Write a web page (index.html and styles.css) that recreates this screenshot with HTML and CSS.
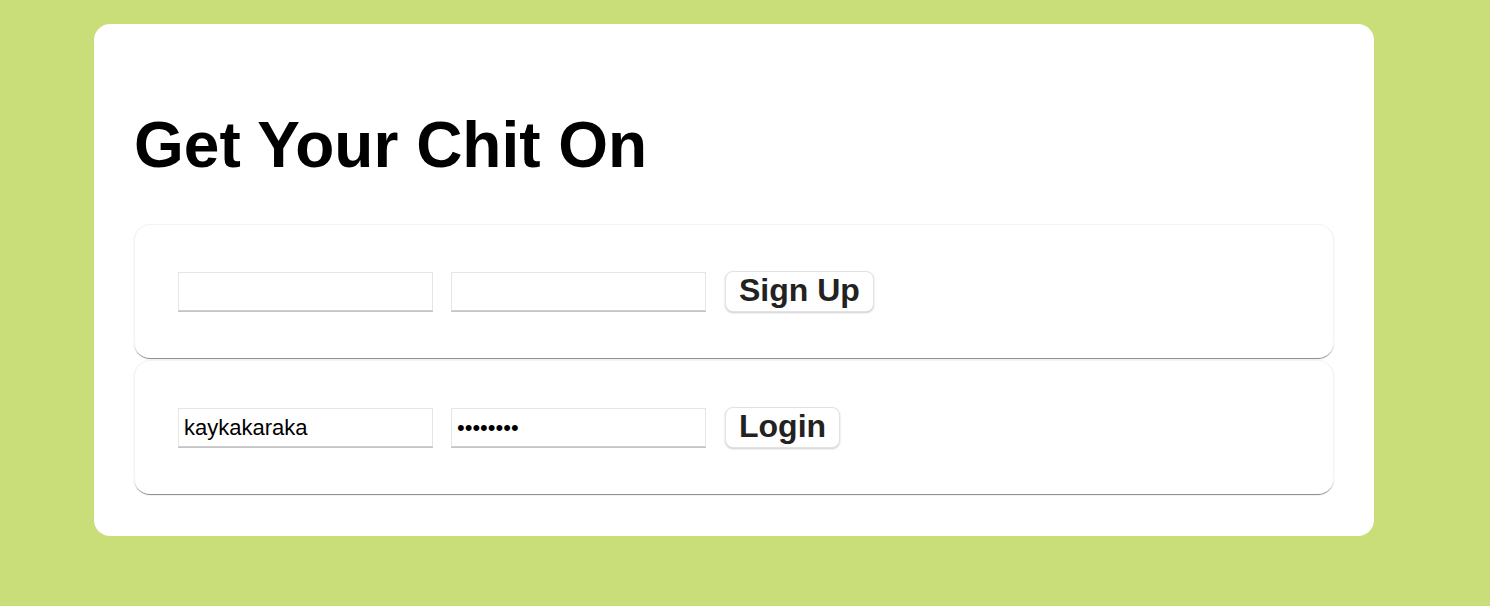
FILE: index.html
```html
<!DOCTYPE html>
<html>
<head>
<meta charset="utf-8">
<link rel="stylesheet" href="styles.css">
</head>
<body>
<div class="card">
  <h1 class="title">Get Your Chit On</h1>
  <form class="panel">
    <input class="field" type="text">
    <input class="field" type="password">
    <button class="btn" type="button">Sign Up</button>
  </form>
  <form class="panel">
    <input class="field" type="text" value="kaykakaraka">
    <input class="field" type="password" value="password">
    <button class="btn" type="button">Login</button>
  </form>
</div>
</body>
</html>
```
FILE: styles.css
```css
html, body {
  margin: 0;
  padding: 0;
  background: #c9dd79;
  font-family: "Liberation Sans", Arial, sans-serif;
}
body {
  padding-top: 24px;
  padding-left: 94px;
  height: 606px;
  box-sizing: border-box;
}
.card {
  width: 1280px;
  box-sizing: border-box;
  background: #fff;
  border-radius: 16px;
  padding: 84px 40px 42px 40px;
}
.title {
  margin: 0 0 42px 0;
  font-size: 64px;
  line-height: 74px;
  font-weight: bold;
  color: #000;
}
.panel {
  display: flex;
  align-items: center;
  gap: 18px;
  margin: 0 0 2px 0;
  height: 134px;
  box-sizing: border-box;
  padding: 0 0 0 43px;
  border: 1px solid #f3f3f3;
  border-bottom: none;
  border-radius: 16px;
  box-shadow: 0 1px 1px rgba(0,0,0,0.25), 0 2px 1px -1px rgba(0,0,0,0.3);
}
.panel:last-child {
  margin-bottom: 0;
}
.field {
  width: 255px;
  height: 39px;
  box-sizing: border-box;
  margin: 0;
  padding: 0 5px;
  border: 1px solid #e6e6e6;
  border-bottom: 1px solid #d0d0d0;
  box-shadow: 0 1px 0 #c4c4c4;
  font-family: "Liberation Sans", Arial, sans-serif;
  font-size: 22px;
  color: #000;
  outline: none;
}
.btn {
  margin: 0 0 0 1px;
  height: 41px;
  padding: 0 13px 3px 13px;
  background: #fff;
  border: 1px solid #e2e2e2;
  border-radius: 8px;
  box-shadow: 0 1px 2px rgba(0,0,0,0.2);
  font-family: "Liberation Sans", Arial, sans-serif;
  font-weight: bold;
  font-size: 32px;
  line-height: 1;
  color: #222;
  cursor: pointer;
}
```
